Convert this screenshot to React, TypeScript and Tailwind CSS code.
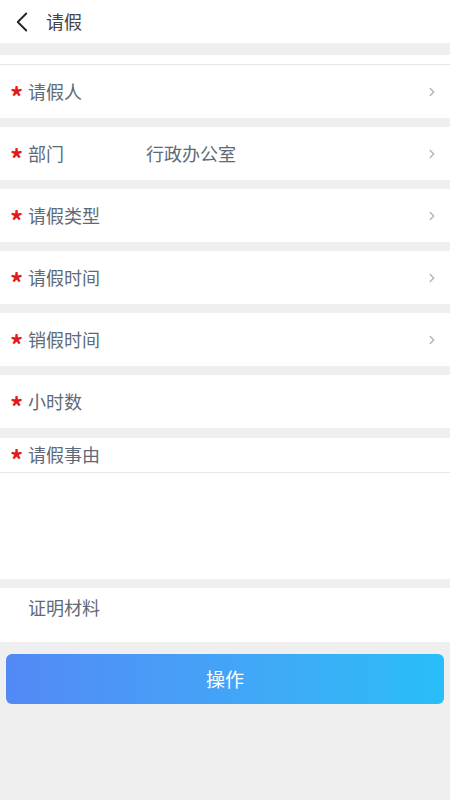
import { ChevronLeft, ChevronRight } from "lucide-react";

const font = "font-['Noto_Sans_CJK_SC','Noto_Sans',sans-serif]";

function Star() {
  return (
    <span className="w-[28px] shrink-0 pl-[10px] pt-[8px] text-[26px] font-bold leading-none text-[#e3191b]">
      *
    </span>
  );
}

function Row({
  label,
  value,
  arrow = true,
  required = true,
}: {
  label: string;
  value?: string;
  arrow?: boolean;
  required?: boolean;
}) {
  return (
    <div className="flex h-[53px] items-center bg-white pr-[11px]">
      {required ? <Star /> : <span className="w-[28px] shrink-0" />}
      <span className="w-[118px] shrink-0 text-[18px] text-[#5e6a77]">{label}</span>
      <span className="flex-1 text-[18px] text-[#5e6a77]">{value}</span>
      {arrow && <ChevronRight size={14} strokeWidth={2.5} className="text-[#b5b5b5]" />}
    </div>
  );
}

export default function App() {
  return (
    <div className={`flex min-h-[800px] w-[450px] flex-col bg-[#efefef] ${font}`}>
      {/* Header */}
      <div className="flex h-[43px] items-center bg-white">
        <ChevronLeft size={34} strokeWidth={1.3} className="ml-[5px] text-[#222]" />
        <span className="ml-[7px] text-[18px] text-[#444]">请假</span>
      </div>

      <div className="mt-[12px] h-[10px] border-b border-[#e6e6e6] bg-white" />

      <div className="flex flex-col gap-[9px]">
        <Row label="请假人" />
        <Row label="部门" value="行政办公室" />
        <Row label="请假类型" />
        <Row label="请假时间" />
        <Row label="销假时间" />
        <Row label="小时数" arrow={false} />
        <div className="mt-[1px] bg-white">
          <div className="flex h-[35px] items-center border-b border-[#e8e8e8]">
            <Star />
            <span className="-mt-[2px] text-[18px] text-[#5e6a77]">请假事由</span>
          </div>
          <div className="h-[106px]" />
        </div>
        <div className="flex h-[54px] items-start bg-white pt-[6px]">
          <span className="w-[28px] shrink-0" />
          <span className="text-[18px] text-[#5e6a77]">证明材料</span>
        </div>
      </div>

      <div className="px-[6px] pt-[12px]">
        <button className="flex h-[50px] w-full items-center justify-center rounded-[6px] bg-gradient-to-r from-[#5289f5] to-[#27bef8] text-[19px] text-white">
          操作
        </button>
      </div>
    </div>
  );
}
